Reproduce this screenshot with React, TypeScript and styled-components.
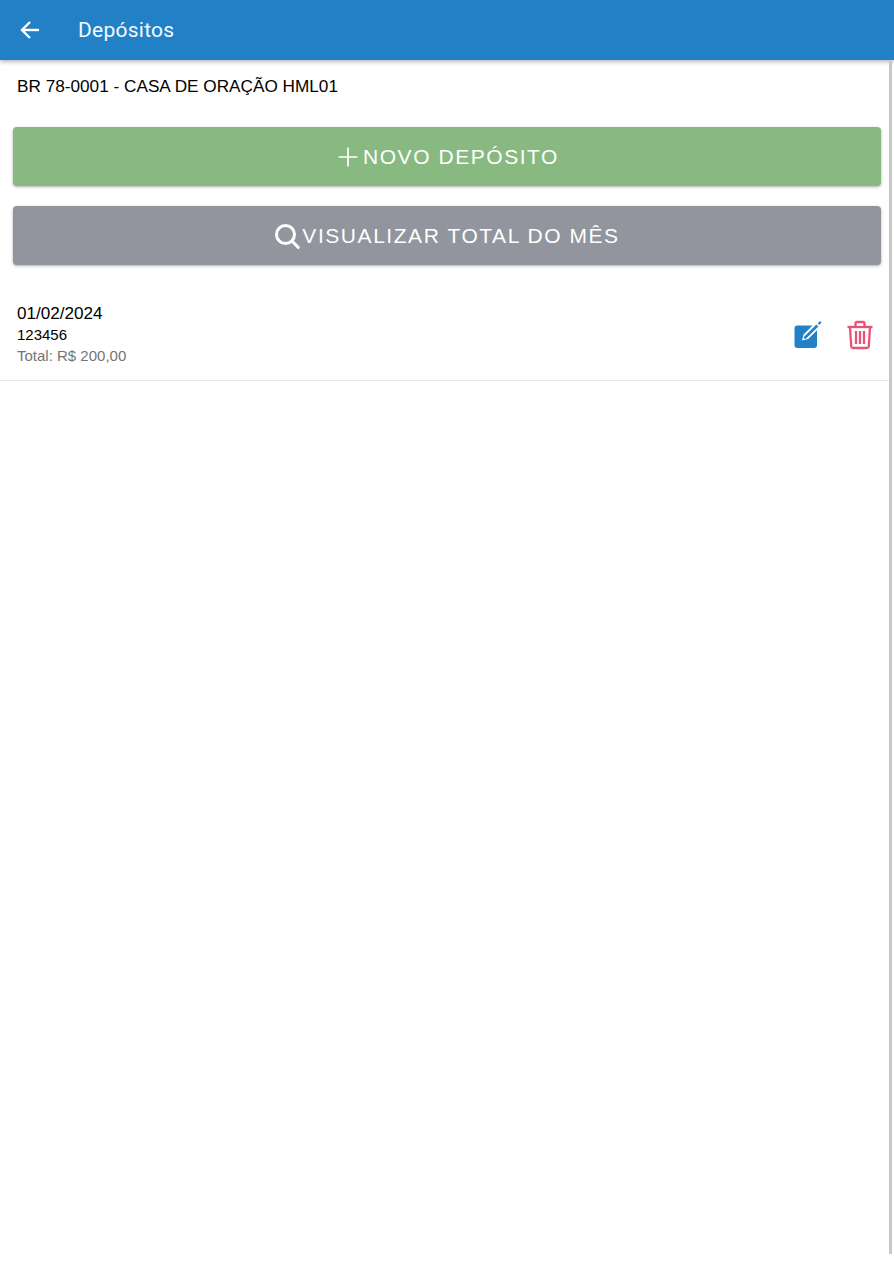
import React from "react";
import styled, { createGlobalStyle } from "styled-components";

const Global = createGlobalStyle`
  html, body { margin: 0; padding: 0; background: #fff; overflow: hidden; }
  body { font-family: "Liberation Sans", Arial, sans-serif; }
`;

const Page = styled.div`
  position: relative;
  width: 894px;
  height: 1280px;
  overflow: hidden;
  background: #fff;
`;

const Header = styled.header`
  height: 60px;
  background: #2281c6;
  box-shadow: 0 2px 4px rgba(0, 0, 0, 0.28);
  display: flex;
  align-items: center;
  padding-left: 19px;
  gap: 37px;
  color: #fff;
`;

const BackIcon = styled.svg`
  width: 22px;
  height: 22px;
  margin-top: -1px;
  display: block;
`;

const Title = styled.h1`
  margin: 0;
  font: 400 21px/24px Roboto, sans-serif;
  letter-spacing: 0.25px;
  color: #f4f9fd;
`;

const Scrollbar = styled.div`
  position: absolute;
  top: 60px;
  right: 2px;
  width: 3px;
  height: 1194px;
  background: #c8c8c8;
`;

const Content = styled.main`
  padding: 16px 13px 0;
`;

const SiteName = styled.div`
  font-size: 17.2px;
  line-height: 20px;
  color: #000;
  padding-left: 4px;
  margin-bottom: 31px;
`;

const ActionButton = styled.button<{ $bg: string }>`
  display: flex;
  align-items: center;
  justify-content: center;
  width: 868px;
  height: 59px;
  margin: 0 0 20px;
  padding: 0;
  border: 0;
  border-radius: 4px;
  background: ${(p) => p.$bg};
  color: #fff;
  font: 400 21px/24px "Liberation Sans", Arial, sans-serif;
  letter-spacing: 1.55px;
  text-transform: uppercase;
  box-shadow: 0 1px 3px rgba(0, 0, 0, 0.32);
`;

const ButtonIcon = styled.svg`
  width: 26px;
  height: 26px;
  margin-right: 2px;
  display: block;
  flex: none;
`;

const Row = styled.section`
  margin: 18px -13px 0;
  height: 96px;
  box-sizing: border-box;
  padding: 19px 15px 0 17px;
  border-bottom: 1px solid #e8e8e8;
  display: flex;
  justify-content: space-between;
  width: 889px;
`;

const RowText = styled.div`
  display: flex;
  flex-direction: column;
`;

const DateLine = styled.div`
  font-size: 17.1px;
  line-height: 20px;
  color: #000;
`;

const CodeLine = styled.div`
  font-size: 15px;
  line-height: 22px;
  color: #000;
`;

const TotalLine = styled.div`
  font-size: 15px;
  line-height: 20px;
  color: #757575;
`;

const RowActions = styled.div`
  display: flex;
  align-items: flex-start;
  gap: 24px;
  padding-top: 16px;
`;

const ActionIcon = styled.svg`
  display: block;
  width: 28px;
  height: 30px;
`;

export default function App() {
  return (
    <Page>
      <Global />
      <Header>
        <BackIcon viewBox="0 0 22 22" fill="none" stroke="#fff" strokeWidth="2.4">
          <path d="M20 11H3" />
          <path d="M11 3l-8 8 8 8" />
        </BackIcon>
        <Title>Depósitos</Title>
      </Header>
      <Scrollbar />
      <Content>
        <SiteName>BR 78-0001 - CASA DE ORAÇÃO HML01</SiteName>
        <ActionButton $bg="#87b981">
          <ButtonIcon viewBox="0 0 26 26" fill="none" stroke="#fff" strokeWidth="1.7">
            <path d="M13 3.5v19M3.5 13h19" />
          </ButtonIcon>
          Novo Depósito
        </ActionButton>
        <ActionButton $bg="#92959d">
          <ButtonIcon viewBox="0 0 26 26" fill="none" stroke="#fff" strokeWidth="3">
            <circle cx="11.5" cy="11.5" r="9" />
            <path d="M18.2 18.2l6 6.2" strokeLinecap="round" />
          </ButtonIcon>
          Visualizar Total do Mês
        </ActionButton>
        <Row>
          <RowText>
            <DateLine>01/02/2024</DateLine>
            <CodeLine>123456</CodeLine>
            <TotalLine>Total: R$ 200,00</TotalLine>
          </RowText>
          <RowActions>
            <ActionIcon viewBox="0 0 28 30" fill="none">
              <path
                d="M3.5 5.5H18.5L9.6 14.4l-1.6 6.2 6.2-1.6 8.8-8.8V25a3 3 0 0 1-3 3H3.5a3 3 0 0 1-3-3V8.5a3 3 0 0 1 3-3z"
                fill="#2281c6"
              />
              <path d="M10.4 18.6l-.8-1.3L22.4 4.6l1.9 1.9L11.6 19z" fill="#2281c6" />
              <path d="M24.4 4.2L26.8 1.8" stroke="#2281c6" strokeWidth="2" />
            </ActionIcon>
            <ActionIcon viewBox="0 0 28 30" fill="none" stroke="#e9536f" strokeWidth="2.3">
              <path d="M1.5 7h25" />
              <path d="M9.5 7V3.5a1.5 1.5 0 0 1 1.5-1.5h6a1.5 1.5 0 0 1 1.5 1.5V7" />
              <path d="M4 7l1.2 19a2.2 2.2 0 0 0 2.2 2h13.2a2.2 2.2 0 0 0 2.2-2L24 7" />
              <path d="M10 11v13M14 11v13M18 11v13" />
            </ActionIcon>
          </RowActions>
        </Row>
      </Content>
    </Page>
  );
}
